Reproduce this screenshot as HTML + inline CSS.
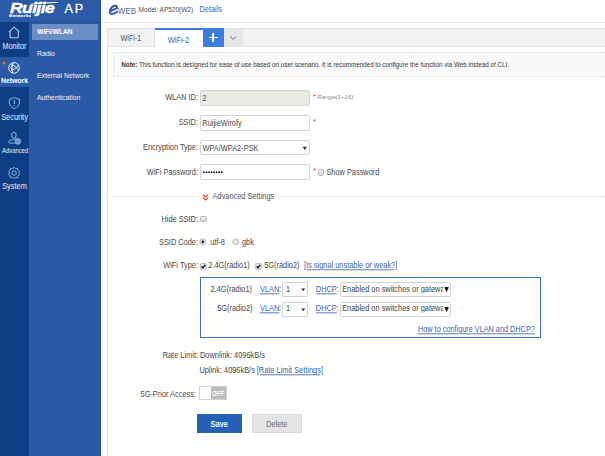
<!DOCTYPE html>
<html><head><meta charset="utf-8">
<style>
*{box-sizing:border-box;margin:0;padding:0}
html,body{width:605px;height:456px;overflow:hidden;background:#fff}
body{position:relative;font-family:"Liberation Sans",sans-serif;color:#333}
.a{position:absolute;white-space:nowrap;line-height:1}
.t,.lbl,.nav1,.nav2,.sy{transform:scaleY(1.17);transform-origin:0 0}
.lbl{font-size:7.4px;color:#4a4a4a;text-align:right;width:120px;left:78px}
.t{font-size:7.4px;color:#4a4a4a}
.lnk{color:#3b63b3;text-decoration:underline;text-decoration-thickness:0.6px;text-decoration-color:#6f8fcc;text-underline-offset:0.6px}
.inp{position:absolute;border:1px solid #d3d3d3;background:#fff;border-radius:1.5px}
.nav1{font-size:7.2px;color:#e8eef8;width:29px;text-align:center;left:0}
.nav2{font-size:6.85px;color:#f2f6fc;left:37px}
</style></head><body>

<!-- sidebar -->
<div class="a" style="left:0;top:0;width:101px;height:22px;background:#2b5aa6"></div>
<div class="a" style="left:0;top:22px;width:29px;height:434px;background:#0f3d84"></div>
<div class="a" style="left:29px;top:22px;width:72px;height:434px;background:#2a59a5"></div>
<div class="a" style="left:0;top:57px;width:29px;height:30px;background:#2a59a5"></div>
<div class="a" style="left:32px;top:24px;width:66px;height:16px;background:#6b8ec6"></div>
<div class="a" style="left:29px;top:21.5px;width:72px;height:1.2px;background:#22509a"></div>
<div class="a" style="left:99.5px;top:0;width:1.5px;height:456px;background:#214f98"></div>

<!-- logo -->
<div class="a" style="left:10px;top:0.6px;font-size:14.2px;font-weight:bold;font-style:italic;color:#fff;transform:scaleX(1.24);transform-origin:0 0;letter-spacing:-0.5px;-webkit-text-stroke:0.4px #fff">Ruijie</div>
<svg class="a" style="left:0;top:0" width="62" height="22"><path d="M31 4.2 Q44 2.3 58 2.5" fill="none" stroke="#fff" stroke-width="1.1"/></svg>
<div class="a" style="left:9px;top:14.2px;font-size:3.9px;font-weight:bold;font-style:italic;color:#fff;letter-spacing:0.62px;-webkit-text-stroke:0.15px #fff">Networks</div>
<div class="a" style="left:64.5px;top:3px;font-size:12.6px;color:#fff;letter-spacing:1.9px;-webkit-text-stroke:0.3px #fff">AP</div>
<!-- nav col1 -->
<svg class="a" style="left:0;top:22px" width="29" height="180" viewBox="0 22 29 180">
  <g fill="none" stroke="#b4c9ee" stroke-width="1" stroke-linejoin="round">
    <path d="M8.9 32.2 L14.2 27.2 L19.5 32.2 M10.1 31.2 V36.8 Q10.1 37.8 11.1 37.8 H17.3 Q18.3 37.8 18.3 36.8 V31.2" stroke-width="1.1"/>
  </g>
  <circle cx="4.2" cy="63" r="1.5" fill="#f26a1b"/>
  <g fill="none" stroke="#eef3fb" stroke-width="0.95">
    <circle cx="14" cy="67.9" r="5.3"/>
    <path d="M12.3 64.6 L16.5 67.6 L11.9 70.6 Z M12.3 64.6 Q10.3 67.5 11.9 70.6 M12.3 64.6 L10.8 63.6 M16.5 67.6 L18.6 64.9 M16.5 67.6 L18.8 70.4 M11.9 70.6 L12.8 73.1 M12.3 64.6 L13.6 62.6"/>
  </g>
  <g fill="none" stroke="#8fb0e2" stroke-width="1">
    <path d="M9.3 99.2 Q12.2 98.8 14.4 97.6 Q16.6 98.8 19.5 99.2 L19.5 102 Q19.5 106.6 14.4 108.5 Q9.3 106.6 9.3 102 Z"/>
    <path d="M14.4 100 V104 M14.4 105.2 V106.2" stroke-width="1.1"/>
  </g>
  <g fill="none" stroke="#8fb0e2" stroke-width="1">
    <ellipse cx="13.9" cy="135.2" rx="2.3" ry="3"/>
    <path d="M15.4 138.6 Q13.5 139.2 10.8 140.1 Q8.3 141.1 8.5 142.3 Q8.8 143.1 10.6 143.1 L14.6 143.1"/>
    <circle cx="17.8" cy="141.3" r="2.9" fill="#5d82c4"/>
    <path d="M16 139.6 L19.6 143 M18.6 138.6 L17 144" stroke-width="0.8"/>
  </g>
  <g fill="none" stroke="#8fb0e2" stroke-width="1">
    <path d="M14.1 167.4 L15.6 168.6 L17.5 168.2 L17.9 170.1 L19.6 171.3 L18.7 173 L19.6 174.7 L17.9 175.9 L17.5 177.8 L15.6 177.4 L14.1 178.6 L12.6 177.4 L10.7 177.8 L10.3 175.9 L8.6 174.7 L9.5 173 L8.6 171.3 L10.3 170.1 L10.7 168.2 L12.6 168.6 Z"/>
    <circle cx="14.1" cy="173" r="2.2"/>
  </g>
</svg>
<div class="a nav1" style="top:41.7px">Monitor</div>
<div class="a nav1" style="top:76.5px;font-weight:bold;font-size:6.9px;color:#fff">Network</div>
<div class="a nav1" style="top:112.5px;font-size:7.4px">Security</div>
<div class="a nav1" style="top:147.8px;font-size:5.9px;left:0.6px">Advanced</div>
<div class="a nav1" style="top:181.6px;font-size:7.4px;color:#e8eef8">System</div>

<!-- nav col2 -->
<div class="a nav2" style="top:28px;font-weight:bold;font-size:6.6px;color:#fff">WiFi/WLAN</div>
<div class="a nav2" style="top:49.7px">Radio</div>
<div class="a nav2" style="top:72px">External Network</div>
<div class="a nav2" style="top:94.1px">Authentication</div>

<!-- header -->
<div class="a" style="left:101px;top:22px;width:504px;height:1px;background:#e6e6e6"></div>
<svg class="a" style="left:107px;top:3.5px" width="14" height="12"><path d="M4 6.9 L9.9 4.1 C10.5 2.3 9.2 1.5 7.6 1.8 C4.6 2.4 2.4 5.8 2.8 8.5 C3.1 10 4.8 10.1 6.4 9.6 C7.9 9.1 9.2 8.4 10.2 7.7" fill="none" stroke="#2b5cb5" stroke-width="2" stroke-linecap="round" stroke-linejoin="round"/></svg>
<div class="a sy" style="left:117.8px;top:6.8px;font-size:8.1px;color:#556b92">WEB</div>
<div class="a t" style="left:138.6px;top:5.6px;font-size:6.5px">Model: AP520(W2)</div>
<div class="a t" style="left:199.6px;top:5.3px;font-size:7.3px;color:#3e69b8">Details</div>

<!-- content frame -->
<div class="a" style="left:107px;top:28px;width:1px;height:428px;background:#e1e1e1"></div>
<!-- tab bar -->
<div class="a" style="left:107px;top:28px;width:498px;height:19px;background:#f1f2f4;border-top:1px solid #e2e2e2;border-bottom:1px solid #e2e2e2;border-left:1px solid #e1e1e1"></div>
<div class="a" style="left:154px;top:28px;width:1px;height:19px;background:#dcdcdc"></div>
<div class="a" style="left:155px;top:28px;width:48px;height:19px;background:#fff;border-top:2px solid #3d7ddf"></div>
<div class="a t" style="left:120.5px;top:34px;font-size:7.2px;color:#555">WiFi-1</div>
<div class="a t" style="left:167.8px;top:35.5px;font-size:7.4px;color:#3e63ad">WiFi-2</div>
<div class="a" style="left:203px;top:28px;width:21px;height:19px;background:#3c7ddd"></div>
<div class="a" style="left:209px;top:36.5px;width:8.7px;height:1.9px;background:#fff"></div>
<div class="a" style="left:212.4px;top:33px;width:1.9px;height:9px;background:#fff"></div>
<div class="a" style="left:224px;top:29px;width:18.5px;height:18px;background:#e7e7e7"></div>
<svg class="a" style="left:224px;top:29px" width="19" height="18"><path d="M6.1 7.3 L9.2 10.5 L12.3 7.3" fill="none" stroke="#6a6a6a" stroke-width="1"/></svg>

<!-- note -->
<div class="a" style="left:113px;top:52px;width:500px;height:25px;background:#f9f9f9;border:1px dotted #dcdcdc"></div>
<div class="a t" style="left:121.3px;top:60.8px;font-size:6.29px;color:#3a3a3a"><b>Note:</b> This function is designed for ease of use based on user scenario. It is recommended to configure the function via Web instead of CLI.</div>

<!-- form -->
<div class="a lbl" style="top:93px">WLAN ID:</div>
<div class="inp" style="left:200px;top:89.5px;width:110px;height:16px;background:#ebebe4"></div>
<div class="a t" style="left:202.3px;top:93.5px">2</div>
<div class="a" style="left:313.1px;top:92.9px;font-size:8px;color:#f03c3c">*</div>
<div class="a" style="left:317.6px;top:94px;font-size:6.1px;font-style:italic;color:#888">Range(1~16)</div>

<div class="a lbl" style="top:118px">SSID:</div>
<div class="inp" style="left:200px;top:114.8px;width:110px;height:16px"></div>
<div class="a t" style="left:202.3px;top:118.5px">RuijieWirofy</div>
<div class="a" style="left:313.1px;top:117.7px;font-size:8px;color:#f03c3c">*</div>

<div class="a lbl" style="top:143px">Encryption Type:</div>
<div class="inp" style="left:200px;top:140.3px;width:110px;height:14.5px;border-radius:2px"></div>
<div class="a t" style="left:202.5px;top:143.5px">WPA/WPA2-PSK</div>
<svg class="a" style="left:301.5px;top:145.5px" width="6" height="5"><path d="M0.6 0.8 H5 L2.8 3.9 Z" fill="#333"/></svg>

<div class="a lbl" style="top:167.5px">WiFi Password:</div>
<div class="inp" style="left:200px;top:164px;width:110px;height:16px"></div>
<svg class="a" style="left:202.5px;top:170.8px" width="22" height="3"><g fill="#222"><circle cx="1.00" cy="1.2" r="0.95"/><circle cx="3.53" cy="1.2" r="0.95"/><circle cx="6.06" cy="1.2" r="0.95"/><circle cx="8.59" cy="1.2" r="0.95"/><circle cx="11.12" cy="1.2" r="0.95"/><circle cx="13.65" cy="1.2" r="0.95"/><circle cx="16.18" cy="1.2" r="0.95"/><circle cx="18.71" cy="1.2" r="0.95"/></g></svg>
<div class="a" style="left:313px;top:167.1px;font-size:8px;color:#f03c3c">*</div>
<div class="inp" style="left:317.5px;top:168.9px;width:6.5px;height:6.9px;border:1px solid #b8b8b8;border-radius:1.5px;background:linear-gradient(#eeeeee,#d9d9d9)"></div>
<div class="a t" style="left:326.4px;top:168px">Show Password</div>

<!-- advanced divider -->
<div class="a" style="left:110px;top:195.5px;width:89px;height:1px;border-top:1px dotted #d9d9d9"></div>
<div class="a" style="left:275px;top:195.5px;width:330px;height:1px;border-top:1px dotted #d9d9d9"></div>
<svg class="a" style="left:201.5px;top:193.5px" width="7" height="7"><path d="M1 0.8 L3.5 3 L6 0.8 M1 3.8 L3.5 6 L6 3.8" fill="none" stroke="#ef4a23" stroke-width="1.3"/></svg>
<div class="a t" style="left:212.6px;top:192px;color:#555">Advanced Settings</div>

<div class="a lbl" style="top:214.6px">Hide SSID:</div>
<div class="inp" style="left:199.9px;top:215.6px;width:6.8px;height:6.8px;border:1px solid #b8b8b8;border-radius:1.5px;background:linear-gradient(#eeeeee,#d9d9d9)"></div>

<div class="a lbl" style="top:237.5px">SSID Code:</div>
<svg class="a" style="left:199.3px;top:238.4px" width="8" height="8"><circle cx="3.8" cy="3.8" r="3.1" fill="#e2e2e2" stroke="#b0b0b0" stroke-width="0.7"/><circle cx="3.8" cy="3.8" r="1.4" fill="#222"/></svg>
<div class="a t" style="left:210.2px;top:237.5px">utf-8</div>
<svg class="a" style="left:231.6px;top:238.4px" width="8" height="8"><circle cx="3.8" cy="3.8" r="3.1" fill="#e4e4e4" stroke="#b4b4b4" stroke-width="0.7"/></svg>
<div class="a t" style="left:242px;top:237.5px">gbk</div>

<div class="a lbl" style="top:260.8px">WiFi Type:</div>
<svg class="a" style="left:200.3px;top:262.8px" width="7" height="7"><rect x="0.5" y="0.5" width="5.8" height="5.8" rx="1" fill="#e2e2e2" stroke="#a8a8a8" stroke-width="0.7"/><path d="M1.6 3.4 L2.9 4.8 L5.3 1.8" fill="none" stroke="#111" stroke-width="1.3"/></svg>
<div class="a t" style="left:208.3px;top:260.8px">2.4G(radio1)</div>
<svg class="a" style="left:255px;top:262.8px" width="7" height="7"><rect x="0.5" y="0.5" width="5.8" height="5.8" rx="1" fill="#e2e2e2" stroke="#a8a8a8" stroke-width="0.7"/><path d="M1.6 3.4 L2.9 4.8 L5.3 1.8" fill="none" stroke="#111" stroke-width="1.3"/></svg>
<div class="a t" style="left:264.2px;top:260.8px">5G(radio2)</div>
<div class="a t lnk" style="left:304px;top:260.8px">[Is signal unstable or weak?]</div>

<!-- VLAN box -->
<div class="a" style="left:199.6px;top:276.9px;width:341.4px;height:61.3px;border:1.5px solid #3f71c1"></div>
<div class="a t" style="left:210.5px;top:284.8px">2.4G(radio1)</div>
<div class="a t lnk" style="left:260px;top:284.8px">VLAN</div><div class="a t" style="left:279px;top:284.8px">:</div>
<div class="inp" style="left:282px;top:282px;width:26px;height:14.5px;border-radius:1px"></div>
<div class="a t" style="left:286px;top:284.8px">1</div>
<svg class="a" style="left:300.6px;top:288px" width="5" height="4"><path d="M0.3 0.5 H4.2 L2.25 3.3 Z" fill="#333"/></svg>
<div class="a t lnk" style="left:315.8px;top:284.8px">DHCP</div><div class="a t" style="left:336.5px;top:284.8px">:</div>
<div class="inp" style="left:340.3px;top:282px;width:110.5px;height:14.5px;overflow:hidden"></div>
<div class="a t" style="left:342.2px;top:284.8px;width:101px;overflow:hidden;color:#444">Enabled on switches or gateways</div>
<div class="a t" style="left:442.8px;top:285.3px;font-size:7.6px;color:#111">&#9660;</div>

<div class="a t" style="left:217.2px;top:304.3px">5G(radio2)</div>
<div class="a t lnk" style="left:260px;top:304.3px">VLAN</div><div class="a t" style="left:279px;top:304.3px">:</div>
<div class="inp" style="left:282px;top:302px;width:26px;height:14.5px;border-radius:1px"></div>
<div class="a t" style="left:286px;top:304.3px">1</div>
<svg class="a" style="left:300.6px;top:308px" width="5" height="4"><path d="M0.3 0.5 H4.2 L2.25 3.3 Z" fill="#333"/></svg>
<div class="a t lnk" style="left:315.8px;top:304.3px">DHCP</div><div class="a t" style="left:336.5px;top:304.3px">:</div>
<div class="inp" style="left:340.3px;top:302px;width:110.5px;height:14.5px"></div>
<div class="a t" style="left:342.2px;top:304.3px;width:101px;overflow:hidden;color:#444">Enabled on switches or gateways</div>
<div class="a t" style="left:442.8px;top:304.8px;font-size:7.6px;color:#111">&#9660;</div>

<div class="a t lnk" style="left:418px;top:325px;font-size:7.3px">How to configure VLAN and DHCP?</div>

<!-- rate limit -->
<div class="a lbl" style="top:350.7px">Rate Limit:</div>
<div class="a t" style="left:200px;top:350.7px">Downlink: 4096kB/s</div>
<div class="a t" style="left:199.4px;top:366px">Uplink: 4096kB/s</div>
<div class="a t lnk" style="left:256.8px;top:366px">[Rate Limit Settings]</div>

<div class="a lbl" style="top:389.5px;width:118px">5G-Prior Access:</div>
<div class="a" style="left:199px;top:386px;width:28px;height:13.5px;background:#bcbcbc;border:1px solid #d2d2d2"></div>
<div class="a" style="left:200px;top:387px;width:11px;height:11.5px;background:#fff"></div>
<div class="a" style="left:212px;top:389.9px;font-size:7px;font-weight:bold;color:#fff;transform:scaleX(0.88) scaleY(1.05);transform-origin:0 0">OFF</div>

<!-- buttons -->
<div class="a" style="left:197px;top:413.6px;width:45px;height:19.8px;background:#2562b6"></div>
<div class="a sy" style="left:210.6px;top:419.5px;font-size:7.5px;color:#fff;-webkit-text-stroke:0.15px #fff">Save</div>
<div class="a" style="left:252px;top:413.6px;width:49.5px;height:19.8px;background:#e5e5e5;border:1px solid #d9d9d9"></div>
<div class="a sy" style="left:266.2px;top:419.5px;font-size:7.3px;color:#6a6a6a">Delete</div>

</body></html>
